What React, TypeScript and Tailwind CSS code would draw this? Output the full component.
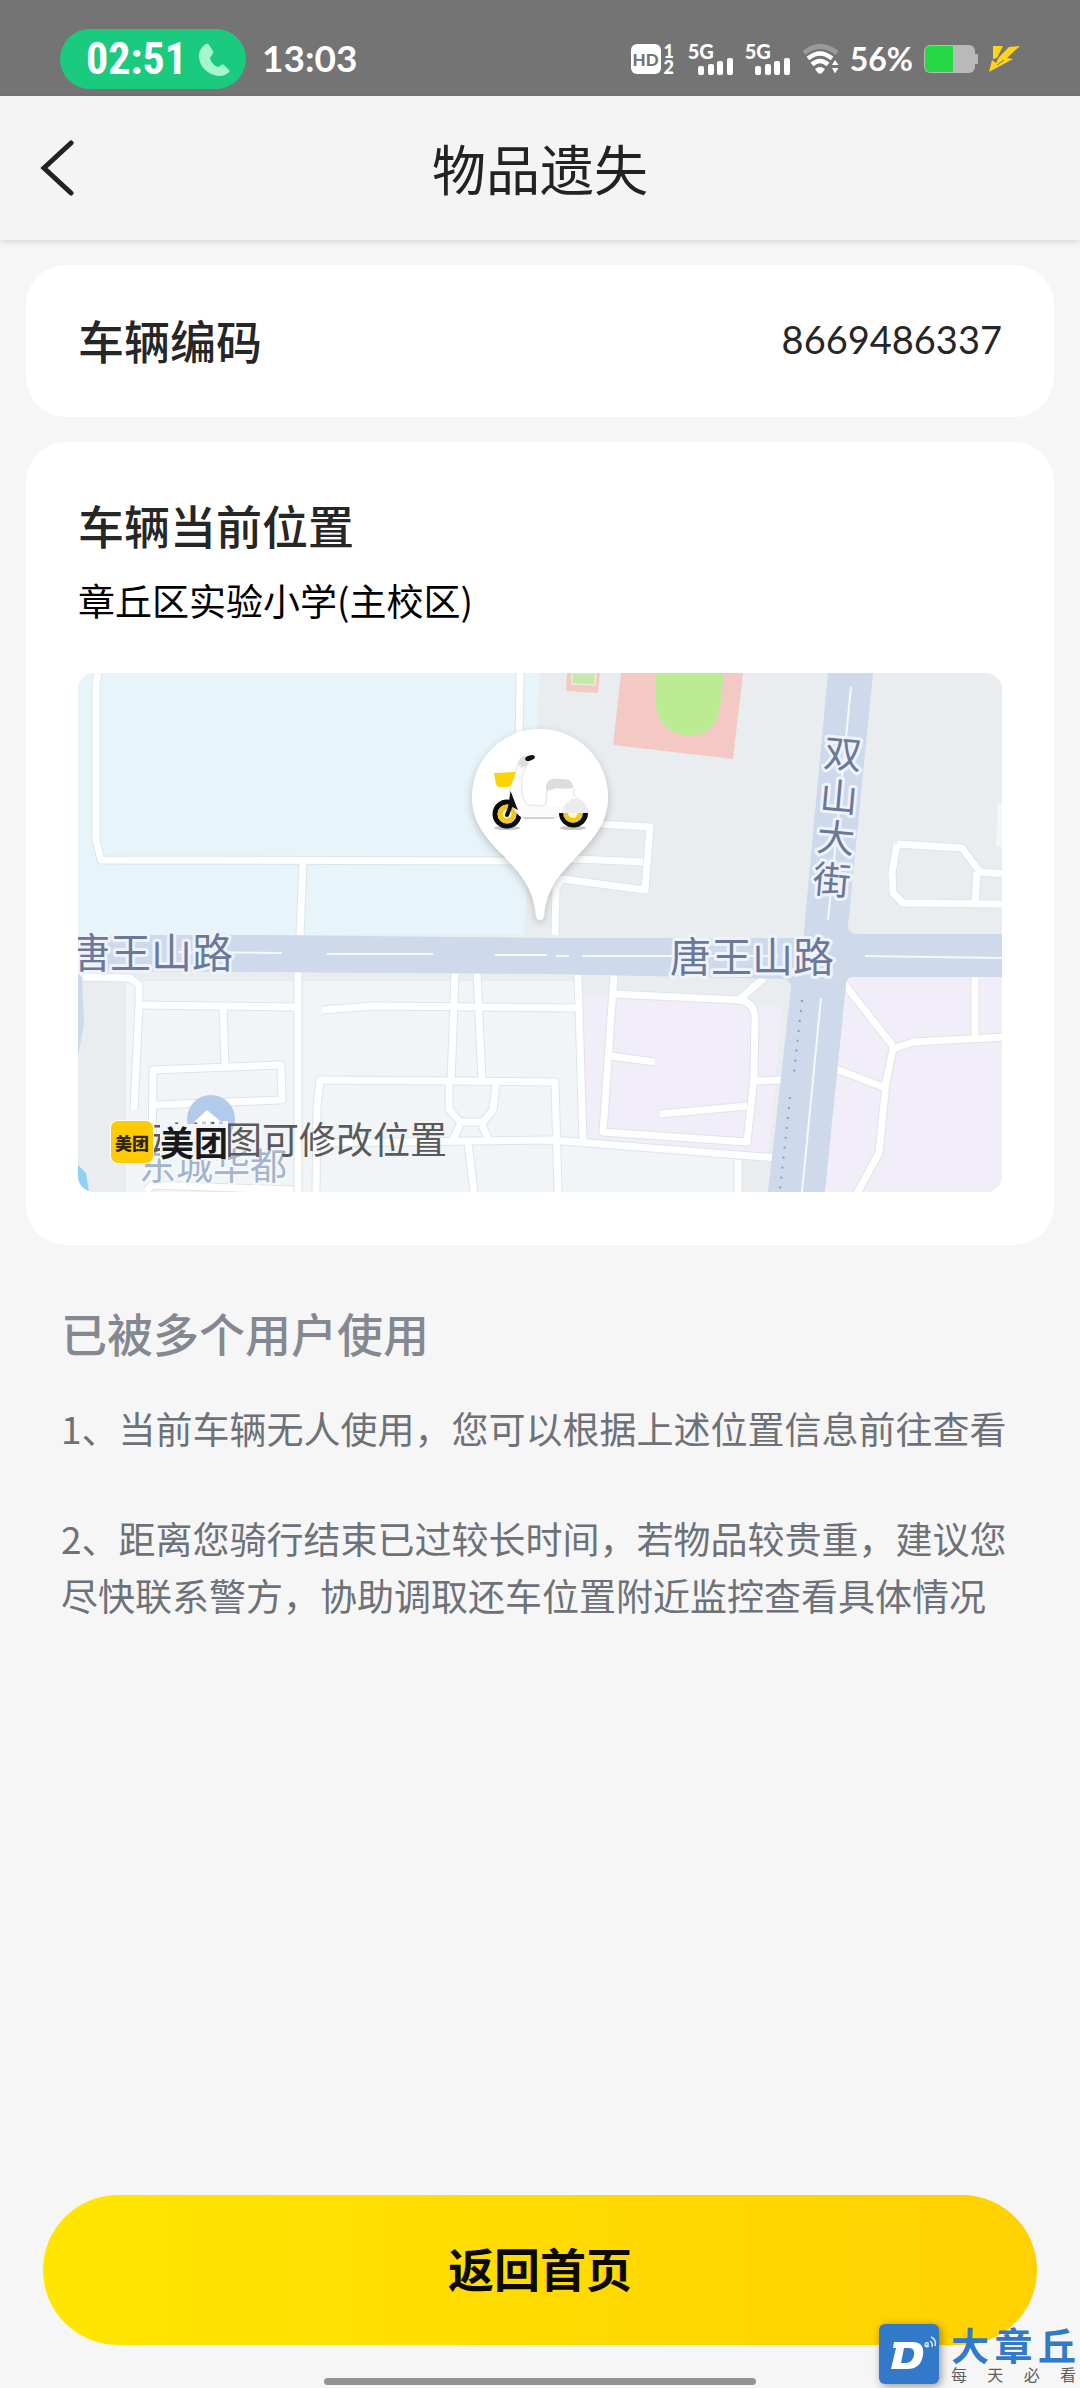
import React from "react";

const areas = [
  { d: "M0 0H462L446 262H0Z", fill: "#e7f4f9" },
  { d: "M48 308H498L502 519H48Z", fill: "#f1f5f7" },
  { d: "M504 322H660L672 334H704L690 485L506 470Z", fill: "#f1eef9" },
  { d: "M484 470L660 486V519H484Z", fill: "#f1f5f7" },
  { d: "M768 304H924V519H745Z", fill: "#f1eef9" },
  { d: "M543 0H665L655 86L535 72Z", fill: "#f5c9c3" },
  { d: "M578 0H646L642 34C640 52 628 63 612 63C594 62 578 50 578 30Z", fill: "#bbec93" },
  { d: "M489 0H522L520 20L488 18Z", fill: "#f5c9c3" },
  { d: "M920 130H924V174H918Z", fill: "#f4f7f7" },
  { d: "M0 492L8 500L11 519H0Z", fill: "#8fd0f5" },
];

const streets = [
  "M20 0L18 12V167L23 187L446 188L499 186L565 189",
  "M442 0L441 80",
  "M225 190L222 262",
  "M220 298V519",
  "M520 151L572 154L567 217L484 206L478 215L477 262",
  "M819 171L884 175L902 199L930 201M819 171L814 200L815 220L825 230L930 231M899 199L897 230",
  "M5 304L52 305L61 312V332L56 437",
  "M61 332L218 334",
  "M145 334L147 392",
  "M74 480L75 397L203 392L204 427L76 432",
  "M244 337L295 333L499 335",
  "M377 300L373 410M399 300L404 408",
  "M371 410V436L382 449H405L415 437L418 410",
  "M382 452L374 468M404 452L411 468",
  "M238 519L239 434L242 407L477 409L480 519",
  "M240 470L472 467L700 485",
  "M390 470L396 519",
  "M68 519L74 512L215 517",
  "M500 302L505 468",
  "M536 302L525 459L669 469L676 404L677 347C677 335 672 328 660 327L536 321",
  "M662 326L686 305",
  "M532 383L577 389",
  "M582 441L669 433",
  "M677 408L704 407",
  "M660 487V519",
  "M764 308L815 373M758 396L805 414",
  "M930 364L835 369L815 376L808 410L801 480L778 522",
  "M897 300V366",
];

const mainRoads = [
  "M0 262L180 262L472 265H726V257L750 0H795L770 253Q770 261 780 261H924V304H775Q768 304 768 312L747 519H690L713 315Q713 306 704 306L472 301L0 298Z",
  "M0 300L4 305L6 350L0 384Z",
];

const avenueLabel = [
  { char: "双", x: 765, y: 81 },
  { char: "山", x: 761, y: 124 },
  { char: "大", x: 758, y: 165 },
  { char: "街", x: 754, y: 207 },
];

function Scooter() {
  return (
    <g>
      <ellipse cx="429" cy="155" rx="13" ry="2" fill="#c4c4c4" />
      <ellipse cx="495" cy="155" rx="13" ry="2" fill="#c4c4c4" />
      <circle cx="429" cy="141" r="12" fill="#fff" stroke="#0b0b0b" strokeWidth="5" />
      <circle cx="429" cy="141" r="7" fill="#fff8c8" stroke="#efc91d" strokeWidth="5" />
      <path
        d="M441 88L449 91L445 101C442 110 444 131 451 132L466 133C470 130 467 116 470 112L496 116C494 128 505 123 511 139L484 140Q480 145 474 145H446C438 143 432 130 431 120Z"
        fill="#fbfbfc"
        stroke="#e3e4e6"
      />
      <path d="M484 140Q486 126 497 126Q508 127 511 140Z" fill="#ebecee" />
      <path d="M481 140a14.500 14.500 0 0 0 29 0Z" fill="#0b0b0b" />
      <path d="M485 140a10 10 0 0 0 20 0Z" fill="#efc91d" />
      <path d="M490 140a5 5 0 0 0 10 0Z" fill="#fff8c8" />
      <path d="M416 100L438 99L433 112Q432 114 429 114H422Q419 114 418 111Z" fill="#fbd203" />
      <path d="M446 145H476" stroke="#cfcfd1" strokeWidth="2" />
      <path d="M468 113C470 104 476 106 485 106C493 106 496 111 495 116L478 115L469 118Z" fill="#dcdde0" />
      <path d="M470 119L495 115C496 122 492 129 485 133H469Z" fill="#fff" />
      <path d="M440 91Q441 83 447 83L452 86L450 92L444 95Z" fill="#dedfe1" />
      <ellipse cx="452" cy="85" rx="5" ry="2.500" transform="rotate(-16 452 85)" fill="#111" />
      <path d="M430 142L433 122L438 135L433 132Z" fill="#111" stroke="#111" strokeWidth="2" />
      <path d="M429 142L433 132" stroke="#111" strokeWidth="4" strokeLinecap="round" />
    </g>
  );
}

function VehicleMap() {
  return (
    <svg viewBox="0 0 924 519" className="block w-full font-['Noto_Sans_CJK_SC',sans-serif]" role="img" aria-label="地图">
      <defs>
        <filter id="pinShadow" x="-20%" y="-20%" width="140%" height="140%">
          <feDropShadow dx="0" dy="3" stdDeviation="4" floodColor="#000" floodOpacity="0.22" />
        </filter>
      </defs>
      <rect width="924" height="519" fill="#e9edef" />
      {areas.map((a) => (
        <path key={a.d} d={a.d} fill={a.fill} />
      ))}
      <path d="M494 0H518L517 12L494 11Z" fill="#c4e8ae" stroke="#f3f6e6" />
      <g fill="none" strokeLinejoin="round">
        {streets.map((d) => (
          <path key={d} d={d} stroke="#dfe4e7" strokeWidth="9" />
        ))}
        {streets.map((d) => (
          <path key={d} d={d} stroke="#fdfefe" strokeWidth="7" />
        ))}
      </g>
      {mainRoads.map((d) => (
        <path key={d} d={d} fill="#ced9eb" />
      ))}
      <path
        d="M773 14L750 247M100 279L204 280M249 281H355M417 282H469M478 283H491M504 283H700M787 283L924 285M743 325L724 519"
        stroke="#f3f8fc"
        strokeWidth="2"
        fill="none"
      />
      <path d="M724 327L716 400M712 424L702 517" stroke="#8c9dc2" strokeWidth="2" strokeDasharray="2 8" />
      <g fill="#6b7897" stroke="#edf2fb" strokeWidth="6" strokeLinejoin="round" paintOrder="stroke" fontSize="41">
        <text x="-9" y="295">唐王山路</text>
        <text x="592" y="299">唐王山路</text>
        <g fontSize="38" textAnchor="middle">
          {avenueLabel.map((l) => (
            <text key={l.char} x={l.x} y={l.y + 14} transform={`rotate(5 ${l.x} ${l.y})`}>
              {l.char}
            </text>
          ))}
        </g>
      </g>
      <circle cx="133" cy="446" r="24" fill="#b3cbea" />
      <path d="M116 449L129 437L142 448H150V468H116Z" fill="#fff" />
      <path d="M124 450H128M132 450H136M141 450H145" stroke="#b9cbe3" strokeWidth="3" />
      <text x="61" y="507" fontSize="37" fill="#a3b4cc" stroke="#f5f8fa" strokeWidth="4" paintOrder="stroke">
        东城华都
      </text>
      <path
        d="M462 56A68 68 0 0 1 530 124C530 148 516 166 499 183C485 198 468 214 466 243Q465 247 462 247Q459 247 458 243C456 214 440 198 426 183C408 166 394 148 394 124A68 68 0 0 1 462 56Z"
        fill="#fff"
        filter="url(#pinShadow)"
      />
      <Scooter />
    </svg>
  );
}

function Signal() {
  return (
    <div className="relative h-8 w-[46px]">
      <span className="absolute top-0 left-0 font-['Lato',sans-serif] text-xl leading-4 font-black">5G</span>
      <svg viewBox="0 0 36 17" className="absolute right-0 bottom-0 h-[17px] w-9" fill="currentColor" aria-hidden="true">
        <rect x="0" y="8" width="6" height="9" rx="2" />
        <rect x="10" y="6" width="6" height="11" rx="2" />
        <rect x="19" y="3" width="6" height="14" rx="2" />
        <rect x="29" y="0" width="6" height="17" rx="2" />
      </svg>
    </div>
  );
}

function StatusBar() {
  return (
    <div className="flex h-24 items-center justify-between bg-[#747474] pt-[22px] pr-[60px] pl-[60px] font-['Lato',sans-serif] text-white">
      <div className="flex items-center gap-4">
        <div className="flex h-[60px] w-[186px] items-center justify-between rounded-full bg-[#1acb7f] pr-4 pl-[26px]">
          <span className="font-['Liberation_Sans_Narrow','Roboto_Condensed','Roboto',sans-serif] text-[44px] leading-none font-bold">02:51</span>
          <svg viewBox="0 0 31 33" className="h-[33px] w-[31px]" aria-hidden="true">
            <path
              d="M7 1Q9 0 10 2L14 8Q15 10 13 12Q10 14 12 18Q15 23 19 24Q20 24 22 22Q23 21 25 22L30 27Q31 28 30 29C26 33 21 34 15 32C6 29 0 22 0 13C0 8 3 3 7 1Z"
              fill="#a5f6cb"
            />
          </svg>
        </div>
        <span className="pb-1 text-[37px] leading-none font-bold">13:03</span>
      </div>
      <div className="flex items-center gap-[11px]">
        <div className="flex h-8 items-center">
          <span className="flex h-[30px] w-[30px] items-center justify-center rounded-md bg-white text-[17px] leading-none font-black text-[#747474]">HD</span>
          <span className="flex w-4 flex-col items-center text-lg leading-4 font-black">
            <span>1</span>
            <span>2</span>
          </span>
        </div>
        <Signal />
        <Signal />
        <svg viewBox="0 0 37 30" className="h-[30px] w-[37px]" fill="none" aria-hidden="true">
          <path d="M2 9Q18 -4 35 9" stroke="#9a9a9a" strokeWidth="5" />
          <path d="M6 14.500Q18 4.500 30 14.500" stroke="#fff" strokeWidth="4.500" />
          <path d="M10 20.500Q18 13.500 26 20.500" stroke="#fff" strokeWidth="4.500" />
          <path d="M13 25Q18 21 23 25L20 29Q18 30.500 16 29Z" fill="#fff" />
          <path d="M30 21L33 16L36.500 21ZM30 24L33 29.500L36.500 24Z" fill="#fff" />
        </svg>
        <span className="text-[32px] leading-none font-bold">56%</span>
        <svg viewBox="0 0 54 28" className="h-7 w-[54px]" aria-hidden="true">
          <rect x="0" y="0" width="51" height="28" rx="6" fill="#b9b9b9" />
          <rect x="50" y="9" width="4" height="10" rx="1" fill="#b9b9b9" />
          <path d="M29 1H6Q1 1 1 6V22Q1 27 6 27H29Z" fill="#27d845" />
        </svg>
        <svg viewBox="0 0 31 26" className="h-[26px] w-[31px]" fill="#ffd21c" aria-hidden="true">
          <path d="M4 0H14L8 12L4 13Z" />
          <path d="M20 1L31 0L18 12L24 13L0 26L3 14L7 17L10 11Z" />
          <path d="M8 19L15 14" stroke="#747474" fill="none" />
        </svg>
      </div>
    </div>
  );
}

function Header() {
  return (
    <header className="relative z-10 flex h-36 items-center justify-center bg-[#f4f4f4] shadow-[0_2px_6px_rgba(0,0,0,0.12)]">
      <button type="button" aria-label="返回" className="absolute inset-y-0 left-0 flex w-28 items-center pl-10">
        <svg viewBox="0 0 34 56" className="h-14 w-[34px]" fill="none" aria-hidden="true">
          <path d="M31 3L4 28L31 53" stroke="#222" strokeWidth="5" strokeLinecap="round" />
        </svg>
      </button>
      <h1 className="text-[54px] leading-none font-normal text-[#222]">物品遗失</h1>
    </header>
  );
}

function MapCard() {
  return (
    <section className="rounded-[40px] bg-white px-13 pt-12 pb-[53px]">
      <h2 className="text-[46px] leading-[68px] font-medium text-[#262626]">车辆当前位置</h2>
      <p className="pt-3.5 pb-[45px] text-[37px] leading-[56px] text-black">章丘区实验小学(主校区)</p>
      <div className="relative overflow-hidden rounded-2xl">
        <VehicleMap />
        <p className="absolute bottom-[30px] left-9 text-[37px] leading-12 text-[#5a5a5a]">拖动地图可修改位置</p>
        <div className="absolute bottom-7 left-8 flex items-center gap-1.5">
          <span className="flex h-11 w-11 items-center justify-center rounded-lg border border-white bg-[#ffcb05] text-[17px] leading-none font-black text-[#2d2609]">
            美团
          </span>
          <span className="bg-[#f1f5f7] text-[34px] leading-9 font-bold text-[#191919]">美团</span>
        </div>
      </div>
    </section>
  );
}

function Watermark() {
  return (
    <div className="absolute right-0 bottom-1 flex items-center gap-3 pr-1">
      <div className="flex h-[60px] w-[60px] items-center justify-center rounded-md bg-[#3279ca] shadow-[2px_2px_8px_rgba(0,0,0,0.4)]">
        <svg viewBox="0 0 60 60" className="h-full w-full" fill="none" aria-hidden="true">
          <path fillRule="evenodd" d="M15 18H33Q46 18 44 31Q42 45 28 45H12L17 24H14ZM25 24L22 39H27Q34 38 35 31Q36 24 30 24Z" fill="#fff" />
          <path d="M47 22Q50 21 49 19Q46 18 46 21Q47 24 50 22M51 17Q54 19 53 23M52 13Q58 16 56 22" stroke="#dbe9fa" strokeWidth="1.500" />
        </svg>
      </div>
      <div className="flex w-[125px] flex-col">
        <span className="text-[38px] leading-10 font-bold text-[#3279ca] [text-align-last:justify]">大章丘</span>
        <span className="text-base leading-5 text-[#5e5e5e] [text-align-last:justify]">每天必看</span>
      </div>
    </div>
  );
}

export default function App() {
  return (
    <div className="relative flex min-h-screen flex-col bg-[#f6f6f7] font-['Noto_Sans_CJK_SC',sans-serif]">
      <StatusBar />
      <Header />
      <main className="flex flex-col gap-[25px] px-[26px] pt-[25px]">
        <section className="flex h-38 items-center justify-between rounded-[40px] bg-white px-13 pb-1">
          <h2 className="text-[46px] leading-none font-medium text-[#262626]">车辆编码</h2>
          <span className="font-['Lato',sans-serif] text-[38px] leading-none text-[#262626]">8669486337</span>
        </section>
        <MapCard />
        <section className="px-[35px] pt-7">
          <h2 className="text-[46px] leading-[68px] font-medium text-[#848890]">已被多个用户使用</h2>
          <div className="flex flex-col gap-[53px] pt-[34px] text-[37px] leading-[57px] text-[#6d7178]">
            <p>1、当前车辆无人使用，您可以根据上述位置信息前往查看</p>
            <p>2、距离您骑行结束已过较长时间，若物品较贵重，建议您尽快联系警方，协助调取还车位置附近监控查看具体情况</p>
          </div>
        </section>
      </main>
      <footer className="mt-auto flex flex-col items-center gap-[33px] px-[43px] pt-12 pb-[3px]">
        <button
          type="button"
          className="h-[150px] w-full rounded-full bg-linear-to-r from-[#ffe600] to-[#ffd100] pb-1.5 text-[46px] leading-none font-bold text-[#0d0b00]"
        >
          返回首页
        </button>
        <div className="h-[7px] w-[432px] max-w-full rounded-full bg-[#949494]" />
      </footer>
      <Watermark />
    </div>
  );
}
